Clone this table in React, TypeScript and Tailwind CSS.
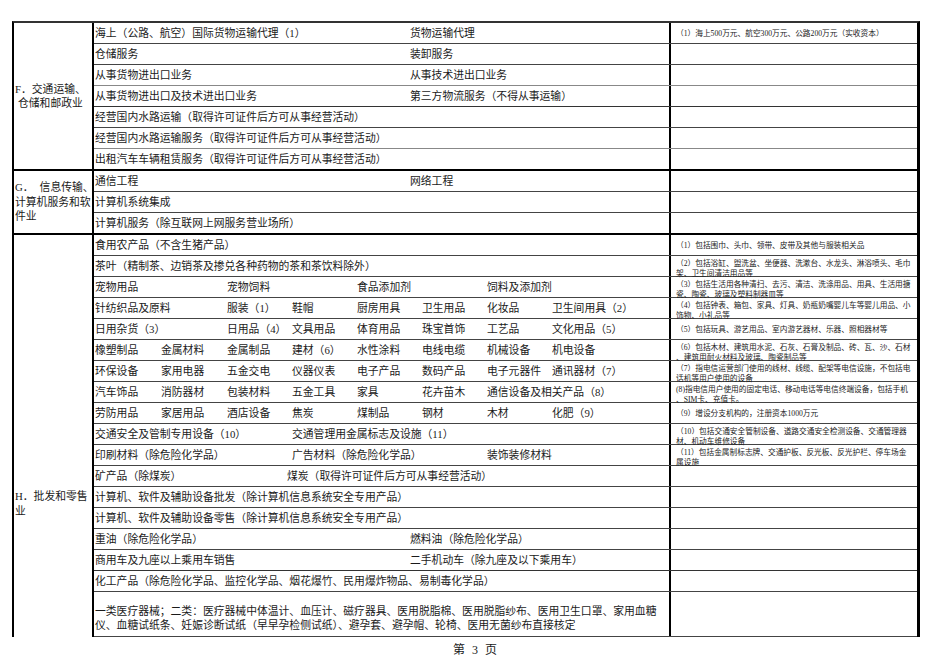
import type { ReactNode } from "react";

type Cell = { t: string; w?: string };

type RowProps = {
  cells: Cell[];
  note?: string[];
  last?: boolean;
  line?: string;
};

const grid8: string[] = [
  "w-[66px]",
  "w-[66px]",
  "w-[65px]",
  "w-[65px]",
  "w-[65px]",
  "w-[65px]",
  "w-[65px]",
];

function cols(texts: string[], widths: string[] = grid8): Cell[] {
  return texts.map((t, i) => ({ t, w: widths[i] }));
}

function ItemRow({ cells, note, last, line }: RowProps) {
  const rowCls = last
    ? "h-[20px]"
    : `h-[21px] border-b ${line ?? "border-[#444]"}`;
  return (
    <div className={`flex ${rowCls}`}>
      <div className="flex h-[20px] w-[577px] shrink-0 items-center overflow-visible border-r-2 border-black pl-px text-[10.8px] leading-none whitespace-nowrap text-[#1a1a1a]">
        {cells.map((c, i) => (
          <span key={`${c.t}-${i}`} className={`shrink-0 ${c.w ?? ""}`}>
            {c.t}
          </span>
        ))}
      </div>
      <div className="h-[20px] min-w-0 flex-1 overflow-visible pl-[5px] text-[7.7px] whitespace-nowrap text-[#222]">
        {note && note.length > 1 && (
          <div className="pt-[3px] leading-[10px]">
            {note[0]}
            <br />
            {note[1]}
          </div>
        )}
        {note && note.length === 1 && (
          <div className="flex h-full items-center pt-[2px] leading-[10px]">{note[0]}</div>
        )}
      </div>
    </div>
  );
}

function Section({
  label,
  children,
  bottom = true,
}: {
  label: ReactNode;
  children: ReactNode;
  bottom?: boolean;
}) {
  return (
    <div className={`flex ${bottom ? "border-b-2 border-black" : ""}`}>
      <div className="w-[80px] shrink-0 border-r-2 border-black text-[10.8px] leading-[14.5px] whitespace-nowrap text-[#1a1a1a]">
        {label}
      </div>
      <div className="min-w-0 flex-1">{children}</div>
    </div>
  );
}

export default function App() {
  return (
    <div className="relative h-[672px] w-[950px] overflow-hidden bg-white font-['Liberation_Serif','Noto_Sans_CJK_SC',serif]">
      <div className="mt-[21px] ml-[12px] w-[908px] border-t-2 border-r-[3px] border-l-2 border-t-[#333] border-r-black border-l-black">
        {/* F */}
        <Section
          label={
            <div className="flex h-full flex-col justify-center pl-px">
              <div>F．交通运输、</div>
              <div className="pl-[3px]">仓储和邮政业</div>
            </div>
          }
        >
          <ItemRow
            cells={[
              { t: "海上（公路、航空）国际货物运输代理（1）", w: "w-[315px]" },
              { t: "货物运输代理" },
            ]}
            note={["（1）海上500万元、航空300万元、公路200万元（实收资本）"]}
          />
          <ItemRow
            cells={[{ t: "仓储服务", w: "w-[315px]" }, { t: "装卸服务" }]}
          />
          <ItemRow
            cells={[
              { t: "从事货物进出口业务", w: "w-[315px]" },
              { t: "从事技术进出口业务" },
            ]}
            line="border-[#888]"
          />
          <ItemRow
            cells={[
              { t: "从事货物进出口及技术进出口业务", w: "w-[315px]" },
              { t: "第三方物流服务（不得从事运输）" },
            ]}
            line="border-[#333]"
          />
          <ItemRow cells={[{ t: "经营国内水路运输（取得许可证件后方可从事经营活动）" }]} />
          <ItemRow
            cells={[{ t: "经营国内水路运输服务（取得许可证件后方可从事经营活动）" }]}
            line="border-[#888]"
          />
          <ItemRow
            cells={[{ t: "出租汽车车辆租赁服务（取得许可证件后方可从事经营活动）" }]}
            last
          />
        </Section>

        {/* G */}
        <Section
          label={
            <div className="flex h-full flex-col justify-center pl-px">
              <div>
                G．<span className="ml-[6px]">信息传输、</span>
              </div>
              <div>计算机服务和软</div>
              <div>件业</div>
            </div>
          }
        >
          <ItemRow
            cells={[{ t: "通信工程", w: "w-[315px]" }, { t: "网络工程" }]}
          />
          <ItemRow cells={[{ t: "计算机系统集成" }]} />
          <ItemRow cells={[{ t: "计算机服务（除互联网上网服务营业场所）" }]} last />
        </Section>

        {/* H */}
        <Section
          bottom={false}
          label={
            <div className="pt-[254px] pl-px">
              <div>H．批发和零售</div>
              <div>业</div>
            </div>
          }
        >
          <ItemRow
            cells={[{ t: "食用农产品（不含生猪产品）" }]}
            note={["（1）包括围巾、头巾、领带、皮带及其他与服装相关品"]}
          />
          <ItemRow
            cells={[{ t: "茶叶（精制茶、边销茶及掺兑各种药物的茶和茶饮料除外）" }]}
            note={[
              "（2）包括浴缸、盥洗盆、坐便器、洗漱台、水龙头、淋浴喷头、毛巾",
              "架、卫生间清洁用品等",
            ]}
          />
          <ItemRow
            cells={cols(
              ["宠物用品", "宠物饲料", "食品添加剂", "饲料及添加剂"],
              ["w-[132px]", "w-[130px]", "w-[130px]"]
            )}
            note={[
              "（3）包括生活用各种清扫、去污、清洁、洗涤用品、用具、生活用搪",
              "瓷、陶瓷、玻璃及塑料制器皿等",
            ]}
          />
          <ItemRow
            cells={cols(
              ["针纺织品及原料", "服装（1）", "鞋帽", "厨房用具", "卫生用品", "化妆品", "卫生间用具（2）"],
              ["w-[132px]", "w-[65px]", "w-[65px]", "w-[65px]", "w-[65px]", "w-[65px]"]
            )}
            note={[
              "（4）包括钟表、箱包、家具、灯具、奶瓶奶嘴婴儿车等婴儿用品、小",
              "饰物、小礼品等",
            ]}
          />
          <ItemRow
            cells={cols(
              ["日用杂货（3）", "日用品（4）", "文具用品", "体育用品", "珠宝首饰", "工艺品", "文化用品（5）"],
              ["w-[132px]", "w-[65px]", "w-[65px]", "w-[65px]", "w-[65px]", "w-[65px]"]
            )}
            note={["（5）包括玩具、游艺用品、室内游艺器材、乐器、照相器材等"]}
          />
          <ItemRow
            cells={cols(["橡塑制品", "金属材料", "金属制品", "建材（6）", "水性涂料", "电线电缆", "机械设备", "机电设备"])}
            note={[
              "（6）包括木材、建筑用水泥、石灰、石膏及制品、砖、瓦、沙、石材",
              "、建筑用耐火材料及玻璃、陶瓷制品等",
            ]}
          />
          <ItemRow
            cells={cols(["环保设备", "家用电器", "五金交电", "仪器仪表", "电子产品", "数码产品", "电子元器件", "通讯器材（7）"])}
            note={[
              "（7）指电信运营部门使用的线材、线缆、配架等电信设施，不包括电",
              "话机等用户使用的设备",
            ]}
          />
          <ItemRow
            cells={cols(["汽车饰品", "消防器材", "包装材料", "五金工具", "家具", "花卉苗木", "通信设备及相关产品（8）"])}
            note={[
              "(8)指电信用户使用的固定电话、移动电话等电信终端设备，包括手机",
              "、SIM卡、充值卡。",
            ]}
          />
          <ItemRow
            cells={cols(["劳防用品", "家居用品", "酒店设备", "焦炭", "煤制品", "钢材", "木材", "化肥（9）"])}
            note={["（9）增设分支机构的，注册资本1000万元"]}
          />
          <ItemRow
            cells={cols(
              ["交通安全及管制专用设备（10）", "交通管理用金属标志及设施（11）"],
              ["w-[197px]"]
            )}
            note={[
              "（10）包括交通安全管制设备、道路交通安全检测设备、交通管理器",
              "材、机动车维修设备",
            ]}
          />
          <ItemRow
            cells={cols(
              ["印刷材料（除危险化学品）", "广告材料（除危险化学品）", "装饰装修材料"],
              ["w-[197px]", "w-[195px]"]
            )}
            note={[
              "（11）包括金属制标志牌、交通护板、反光板、反光护栏、停车场金",
              "属设施",
            ]}
          />
          <ItemRow
            cells={cols(
              ["矿产品（除煤炭）", "煤炭（取得许可证件后方可从事经营活动）"],
              ["w-[192px]"]
            )}
          />
          <ItemRow cells={[{ t: "计算机、软件及辅助设备批发（除计算机信息系统安全专用产品）" }]} />
          <ItemRow cells={[{ t: "计算机、软件及辅助设备零售（除计算机信息系统安全专用产品）" }]} />
          <ItemRow
            cells={[
              { t: "重油（除危险化学品）", w: "w-[315px]" },
              { t: "燃料油（除危险化学品）" },
            ]}
          />
          <ItemRow
            cells={[
              { t: "商用车及九座以上乘用车销售", w: "w-[315px]" },
              { t: "二手机动车（除九座及以下乘用车）" },
            ]}
            line="border-[#333]"
          />
          <ItemRow
            cells={[
              { t: "化工产品（除危险化学品、监控化学品、烟花爆竹、民用爆炸物品、易制毒化学品）" },
            ]}
          />
          <div className="flex h-[45px] border-b border-[#444]">
            <div className="flex w-[577px] shrink-0 items-end border-r-2 border-black pb-[4px] pl-px text-[10.8px] leading-[14px] whitespace-nowrap text-[#1a1a1a]">
              <div>
                一类医疗器械；二类：医疗器械中体温计、血压计、磁疗器具、医用脱脂棉、医用脱脂纱布、医用卫生口罩、家用血糖
                <br />
                仪、血糖试纸条、妊娠诊断试纸（早早孕检侧试纸）、避孕套、避孕帽、轮椅、医用无菌纱布直接核定
              </div>
            </div>
            <div className="flex-1" />
          </div>
        </Section>
      </div>
      <div className="mt-[6px] flex justify-center gap-[7px] text-[12px] leading-[14px] text-[#1a1a1a]">
        <span>第</span>
        <span>3</span>
        <span>页</span>
      </div>
    </div>
  );
}
